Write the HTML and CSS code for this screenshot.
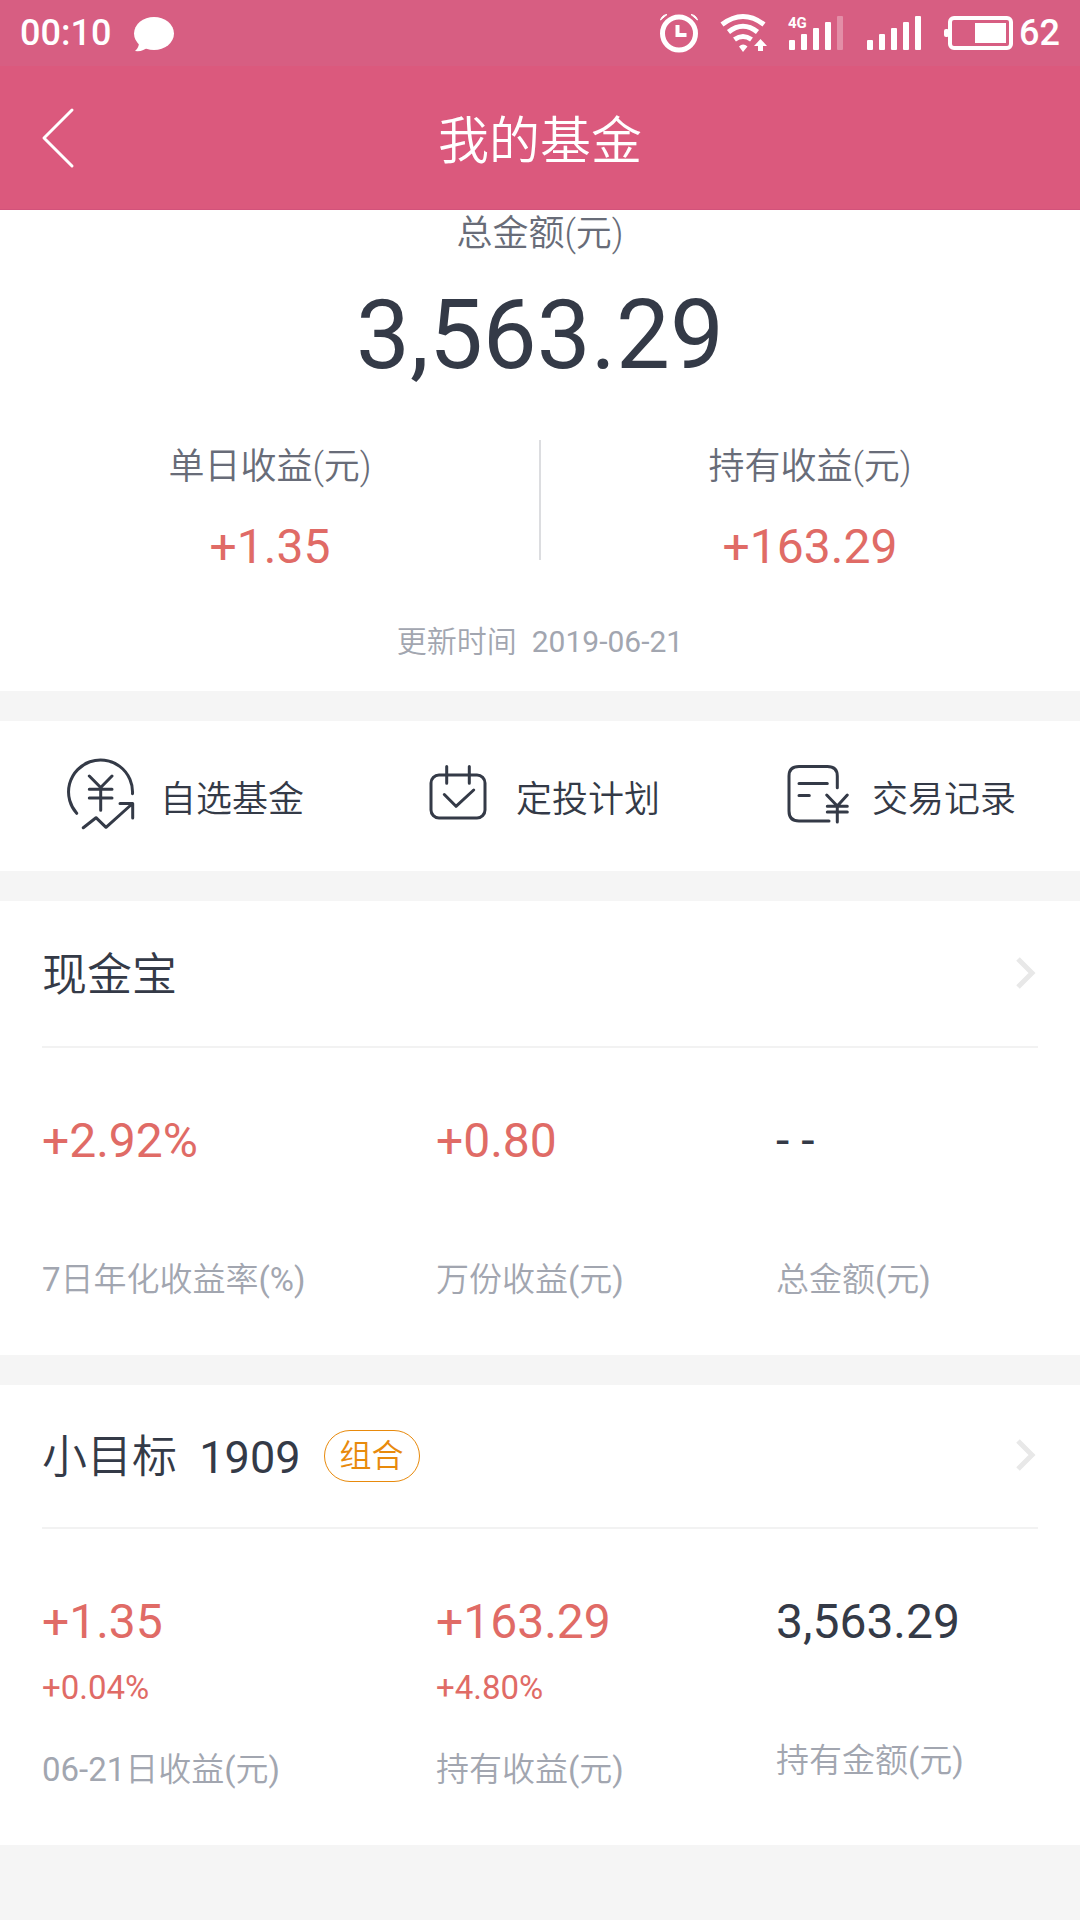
FILE: index.html
```html
<!DOCTYPE html>
<html lang="zh-CN">
<head>
<meta charset="utf-8">
<meta name="viewport" content="width=device-width">
<title>我的基金</title>
<link rel="stylesheet" href="styles.css">
</head>
<body>
<div class="status-bar">
  <div class="status-group">
    <span>00:10</span>
    <svg width="42" height="40" viewBox="132 13 42 40" fill="#fff"><ellipse cx="153" cy="33.500" rx="20" ry="16.500"/><path d="M138 42Q138 48 134 51Q142 52 147 47Z"/></svg>
  </div>
  <div class="status-group">
    <svg width="38" height="40" viewBox="659 13 38 40" fill="none" stroke="#fff"><circle cx="678" cy="33.500" r="16.500" stroke-width="5"/><path d="M676.500 25V35H685.500" stroke-width="4"/><path d="M659.500 20Q661 15 666 14.500L659.500 20ZM696.500 20Q695 15 690 14.500Z" fill="#fff" stroke-width="1"/></svg>
    <svg width="47" height="40" viewBox="720 13 47 40" fill="none" stroke="#fff" stroke-width="5"><path d="M722 24.500Q743 8.500 764 24.500M728.500 32Q743 20.500 757.500 32M734.500 39.500Q743 33.500 751.500 39.500"/><path d="M739 46.500Q743 42.500 747.500 46.500L743 52ZM760.500 39L767 46H763V51H758V46H754Z" fill="#fff" stroke="none"/></svg>
    <svg width="55" height="40" viewBox="789 13 55 40" fill="#fff"><text class="network" x="788" y="28">4G</text><rect x="789" y="40" width="6" height="10" rx="1"/><rect x="801" y="34" width="6" height="16" rx="1"/><rect x="813" y="28" width="6" height="22" rx="1"/><rect x="825" y="22" width="6" height="28" rx="1"/><rect x="837" y="16" width="6" height="34" rx="1" opacity=".3"/></svg>
    <svg width="56" height="40" viewBox="866 13 56 40" fill="#fff"><rect x="867" y="40" width="6" height="10" rx="1"/><rect x="879" y="34" width="6" height="16" rx="1"/><rect x="891" y="28" width="6" height="22" rx="1"/><rect x="903" y="22" width="6" height="28" rx="1"/><rect x="915" y="16" width="6" height="34" rx="1"/></svg>
    <div class="battery">
      <svg width="70" height="40" viewBox="945 13 70 40" fill="#fff"><rect x="951" y="18" width="61" height="30" rx="4" fill="none" stroke="#fff" stroke-width="4"/><rect x="945" y="29" width="5" height="8" rx="2"/><rect x="976" y="23" width="31" height="20"/></svg>
      <span>62</span>
    </div>
  </div>
</div>
<header class="nav">
  <button class="back" type="button" aria-label="返回"><svg width="32" height="60" viewBox="0 0 32 60" fill="none" stroke="#fff" stroke-width="3" stroke-linecap="round" stroke-linejoin="round"><path d="M30 2L2 30L30 58"/></svg></button>
  <h1>我的基金</h1>
</header>
<main>
  <section class="summary">
    <div class="total-label">总金额(元)</div>
    <div class="total">3,563.29</div>
    <dl class="earnings">
      <div class="earning"><dt>单日收益(元)</dt><dd>+1.35</dd></div>
      <div class="earning"><dt>持有收益(元)</dt><dd>+163.29</dd></div>
    </dl>
    <p class="updated">更新时间&nbsp; 2019-06-21</p>
  </section>

  <nav class="actions">
    <a href="#watchlist"><svg class="action-icon" viewBox="0 0 70 70"><path d="M10.700 52.300A32 32 0 1 1 66.500 32.700M23.300 15L34.700 26.500L46 15M23.300 28.300H46M23.300 37H46M34.700 26.500V49.300M17.300 66.700L30 56.700L40 66.300L66 43M54 42.500H66.700V57"/></svg>自选基金</a>
    <a href="#plan"><svg class="action-icon" viewBox="0 0 70 70"><rect x="9" y="14" width="54" height="43" rx="8"/><path d="M24.700 5.500V22.300M47.300 5.500V22.300M22.300 33.500L34 45.300L51.700 29"/></svg>定投计划</a>
    <a href="#records"><svg class="action-icon" viewBox="0 0 70 70"><path d="M59.300 26.700V15Q59.300 5.500 49.300 5.500H21Q11 5.500 11 15V50Q11 60 21 60H51M21 22.500H49.300M21 34.500H31.300M48.700 34L59.300 45L69.300 34M49.300 45.300H69.300M49.300 51H69.300M59.300 45V61"/></svg>交易记录</a>
  </nav>

  <section class="card card-roomy">
    <a class="card-head" href="#cash">
      <h2>现金宝</h2>
      <svg class="chevron" viewBox="0 0 22 34"><path d="M2 2L16 16L2 30"/></svg>
    </a>
    <div class="metrics">
      <div class="metric"><div class="value gain">+2.92%</div><div class="label">7日年化收益率(%)</div></div>
      <div class="metric"><div class="value gain">+0.80</div><div class="label">万份收益(元)</div></div>
      <div class="metric"><div class="value">- -</div><div class="label">总金额(元)</div></div>
    </div>
  </section>

  <section class="card">
    <a class="card-head" href="#target-1909">
      <h2>小目标&nbsp; 1909</h2>
      <span class="tag">组合</span>
      <svg class="chevron" viewBox="0 0 22 34"><path d="M2 2L16 16L2 30"/></svg>
    </a>
    <div class="metrics">
      <div class="metric"><div class="value gain">+1.35</div><div class="rate gain">+0.04%</div><div class="label">06-21日收益(元)</div></div>
      <div class="metric"><div class="value gain">+163.29</div><div class="rate gain">+4.80%</div><div class="label">持有收益(元)</div></div>
      <div class="metric"><div class="value">3,563.29</div><div class="label">持有金额(元)</div></div>
    </div>
  </section>
</main>
</body>
</html>
```
FILE: styles.css
```css
* { box-sizing: border-box; }

body {
  margin: 0;
  background: #f5f5f5;
  color: #343a47;
  font-family: Roboto, "Noto Sans CJK SC DemiLight", "Noto Sans CJK SC", sans-serif;
  font-weight: 400;
}

h1, h2, p, dl, dd { margin: 0; font-weight: inherit; }
a { color: inherit; text-decoration: none; }
svg { display: block; flex: none; overflow: visible; }

/* Status bar */
.status-bar {
  display: flex;
  justify-content: space-between;
  align-items: center;
  height: 66px;
  padding: 0 20px;
  background: #d75e82;
  color: #fff;
  font-size: 36px;
  font-weight: 500;
}
.status-group { display: flex; align-items: center; gap: 22px; }
.battery { display: flex; align-items: center; gap: 5px; }
.network { font-size: 15px; font-weight: 700; }

/* Title bar */
.nav {
  display: grid;
  grid-template-columns: 120px 1fr 120px;
  align-items: center;
  height: 144px;
  border-bottom: 1px solid #d2527a;
  background: #db597d;
  color: #fff;
}
.nav h1 { padding-top: 8px; font-size: 51px; line-height: 72px; text-align: center; font-weight: 350; }
.back { padding: 0 0 0 42px; border: 0; background: none; }

/* Totals */
.summary { padding-bottom: 29px; background: #fff; text-align: center; }
.total-label { font-size: 36px; line-height: 48px; color: #686c78; font-weight: 350; }
.total { margin-top: 21px; font-size: 96px; line-height: 112px; }
.earnings { display: grid; grid-template-columns: 1fr 1fr; margin-top: 49px; position: relative; }
.earnings::after {
  content: "";
  position: absolute;
  left: 50%;
  top: 0;
  width: 2px;
  height: 120px;
  margin-left: -1px;
  background: #dcdde0;
}
.earning dt { font-size: 36px; line-height: 54px; color: #686c78; font-weight: 350; }
.earning dd { margin-top: 23px; font-size: 48px; line-height: 60px; color: #e06b66; }
.updated { margin-top: 45px; font-size: 30px; line-height: 40px; color: #a2a6b0; }

/* Shortcuts */
.actions {
  display: flex;
  justify-content: space-between;
  align-items: center;
  height: 150px;
  margin-top: 30px;
  padding: 0 64px 0 66px;
  background: #fff;
  font-size: 36px;
  font-weight: 350;
}
.actions a { display: flex; align-items: center; gap: 24px; }
.action-icon {
  width: 70px;
  height: 70px;
  fill: none;
  stroke: #343a47;
  stroke-width: 3px;
  stroke-linecap: round;
  stroke-linejoin: round;
}

/* Product cards */
.card { margin-top: 30px; padding: 0 42px 53px; background: #fff; }
.card-head {
  display: flex;
  align-items: center;
  height: 144px;
  border-bottom: 2px solid #f2f2f2;
}
.card-roomy .card-head { height: 147px; }
.card-head h2 { padding-top: 4px; font-size: 45px; line-height: 60px; }
.tag {
  margin-left: 23px;
  padding: 1px 15px;
  border: 1px solid #e88a0c;
  border-radius: 26px;
  color: #e88a0c;
  font-size: 32px;
  line-height: 48px;
  font-weight: 350;
}
.chevron {
  width: 22px;
  height: 34px;
  margin-left: auto;
  fill: none;
  stroke: #e8e8e8;
  stroke-width: 5px;
}
.metrics { display: grid; grid-template-columns: 394fr 340fr 262fr; padding-top: 63px; }
.value { font-size: 48px; line-height: 60px; }
.rate { margin-top: 14px; font-size: 33px; line-height: 44px; }
.gain { color: #e06b66; }
.label { margin-top: 87px; font-size: 33px; line-height: 44px; color: #a2a6b0; }
.rate + .label { margin-top: 38px; }
```
